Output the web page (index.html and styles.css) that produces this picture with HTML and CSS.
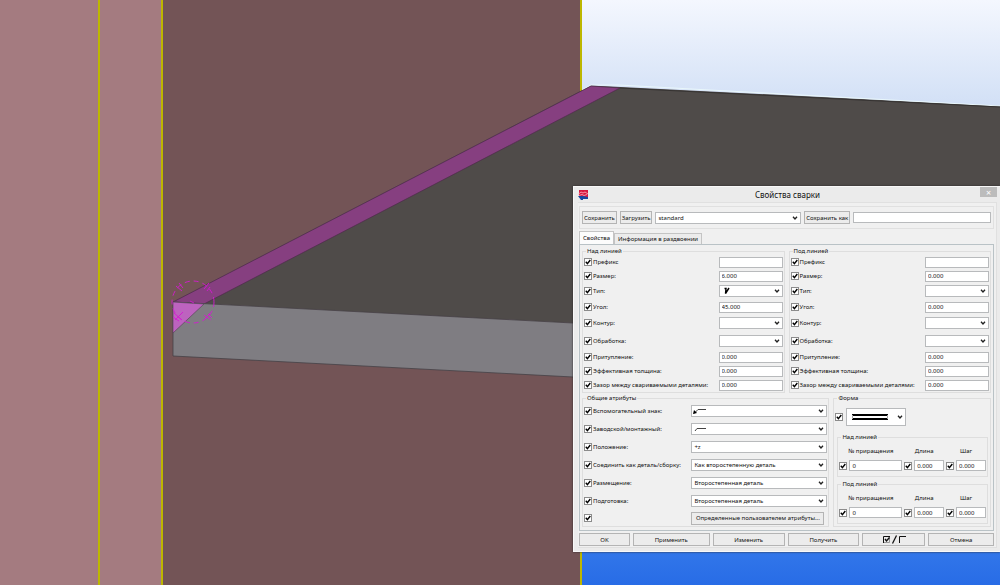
FILE: index.html
```html
<!DOCTYPE html>
<html lang="ru">
<head>
<meta charset="utf-8">
<title>Свойства сварки</title>
<link rel="stylesheet" href="styles.css">
</head>
<body>
<main class="viewport">
<svg class="scene" viewBox="0 0 1000 585" preserveAspectRatio="xMinYMin slice" aria-hidden="true">
  <defs>
    <linearGradient id="sky" x1="0" y1="0" x2="0" y2="1">
      <stop offset="0" stop-color="#f4f7fe"/>
      <stop offset="0.18" stop-color="#d2e0f6"/>
      <stop offset="0.94" stop-color="#3277ea"/>
      <stop offset="1" stop-color="#286ce6"/>
    </linearGradient>
  </defs>
  <rect x="581" width="419" height="585" fill="url(#sky)"/>
  <rect width="162" height="585" fill="#a47b80"/>
  <rect x="162" width="418" height="585" fill="#735456"/>
  <path d="M99 0V585M162 0V585M581 0V585" stroke="#bdb700" stroke-width="2"/>
  <path d="M591 85.500L1000 106V340L573 323L173 302Z" fill="#4f4b49"/>
  <path d="M582 90L591 85H619L1000 106" fill="none" stroke="#e9f7fb"/>
  <path d="M173 302L591 86L620 88L204 304Z" fill="#863f80" stroke="#4e2b4b" stroke-width="0.700"/>
  <path d="M620 88L1000 107" stroke="#363332"/>
  <path d="M173 302L573 323L640 327V381L573 377L173 356Z" fill="#7f7d82" stroke="#454146" stroke-width="0.800"/>
  <path d="M173 302L204 304L173 333Z" fill="#bd63bf" stroke="#5b455b" stroke-width="0.700"/>
  <g fill="none" stroke="#d41bd0">
    <circle cx="193" cy="302" r="21" stroke-dasharray="5 4" stroke-width="0.900"/>
    <path d="M176 286l6 5M179 283l4 5M204 289l5-6M207 291l3-4M174 313l8 7M173 317l6 4M175 320l8-8M204 315l7 5M205 319l5-6M208 314l4 4M190 301l4 2" stroke-width="0.900"/>
  </g>
</svg>

<section class="dialog" role="dialog" aria-labelledby="dialog-title">
  <header class="titlebar">
    <svg class="app-icon" viewBox="0 0 10 10" aria-hidden="true"><path d="M1 0h9v7H1z" fill="#d8173d"/><path d="M0 6h5l5 1v2H5v1H3z" fill="#17479e"/><path d="M0 4.500l3-2.500 2 1 2-1 3 2M1 5.500l3-1 2 1 3-1" stroke="#fbb4c3" fill="none" stroke-width="0.800"/></svg>
    <h1 id="dialog-title">Свойства сварки</h1>
    <button class="close" aria-label="Закрыть">×</button>
  </header>

  <div class="client">
    <div class="toolbar">
      <button>Сохранить</button>
      <button>Загрузить</button>
      <select class="preset" aria-label="Набор свойств"><option>standard</option></select>
      <button>Сохранить как</button>
      <input class="save-name" type="text" aria-label="Имя набора">
    </div>

    <div class="tabs" role="tablist">
      <button class="tab active" role="tab" aria-selected="true">Свойства</button>
      <button class="tab" role="tab" aria-selected="false">Информация в раздвоении</button>
    </div>

    <div class="panel" role="tabpanel">
      <div class="sides">
        <fieldset>
          <legend>Над линией</legend>
          <div class="side-rows">
            <label><input type="checkbox" checked>Префикс</label><input type="text" aria-label="Префикс">
            <label><input type="checkbox" checked>Размер:</label><input type="text" aria-label="Размер" value="6.000">
            <label><input type="checkbox" checked>Тип:</label><select class="pic-bevel" aria-label="Тип"><option></option></select>
            <label><input type="checkbox" checked>Угол:</label><input type="text" aria-label="Угол" value="45.000">
            <label><input type="checkbox" checked>Контур:</label><select aria-label="Контур"><option></option></select>
            <label><input type="checkbox" checked>Обработка:</label><select aria-label="Обработка"><option></option></select>
            <label><input type="checkbox" checked>Притупление:</label><input type="text" aria-label="Притупление" value="0.000">
            <label><input type="checkbox" checked>Эффективная толщина:</label><input type="text" aria-label="Эффективная толщина" value="0.000">
            <label><input type="checkbox" checked>Зазор между свариваемыми деталями:</label><input type="text" aria-label="Зазор" value="0.000">
          </div>
        </fieldset>
        <fieldset>
          <legend>Под линией</legend>
          <div class="side-rows">
            <label><input type="checkbox" checked>Префикс</label><input type="text" aria-label="Префикс">
            <label><input type="checkbox" checked>Размер:</label><input type="text" aria-label="Размер" value="0.000">
            <label><input type="checkbox" checked>Тип:</label><select aria-label="Тип"><option></option></select>
            <label><input type="checkbox" checked>Угол:</label><input type="text" aria-label="Угол" value="0.000">
            <label><input type="checkbox" checked>Контур:</label><select aria-label="Контур"><option></option></select>
            <label><input type="checkbox" checked>Обработка:</label><select aria-label="Обработка"><option></option></select>
            <label><input type="checkbox" checked>Притупление:</label><input type="text" aria-label="Притупление" value="0.000">
            <label><input type="checkbox" checked>Эффективная толщина:</label><input type="text" aria-label="Эффективная толщина" value="0.000">
            <label><input type="checkbox" checked>Зазор между свариваемыми деталями:</label><input type="text" aria-label="Зазор" value="0.000">
          </div>
        </fieldset>
      </div>

      <div class="lower">
        <fieldset>
          <legend>Общие атрибуты</legend>
          <div class="common-rows">
            <label><input type="checkbox" checked>Вспомогательный знак:</label><select class="pic-arrow" aria-label="Вспомогательный знак"><option></option></select>
            <label><input type="checkbox" checked>Заводской/монтажный:</label><select class="pic-line" aria-label="Заводской/монтажный"><option></option></select>
            <label><input type="checkbox" checked>Положение:</label><select aria-label="Положение"><option>+z</option></select>
            <label><input type="checkbox" checked>Соединить как деталь/сборку:</label><select aria-label="Соединить как"><option>Как второстепенную деталь</option></select>
            <label><input type="checkbox" checked>Размещение:</label><select aria-label="Размещение"><option>Второстепенная деталь</option></select>
            <label><input type="checkbox" checked>Подготовка:</label><select aria-label="Подготовка"><option>Второстепенная деталь</option></select>
            <label><input type="checkbox" checked aria-label="Атрибуты пользователя"></label><button class="user-attrs">Определенные пользователем атрибуты...</button>
          </div>
        </fieldset>

        <fieldset class="form-group">
          <legend>Форма</legend>
          <div class="shape-row">
            <input type="checkbox" checked aria-label="Форма">
            <select class="pic-shape" aria-label="Вид формы"><option></option></select>
          </div>
          <fieldset class="increments">
            <legend>Над линией</legend>
            <div class="increment-grid">
              <span class="head">№ приращения</span><span class="head">Длина</span><span class="head">Шаг</span>
              <input type="checkbox" checked aria-label="№ приращения"><input type="text" aria-label="№ приращения" value="0">
              <input type="checkbox" checked aria-label="Длина"><input type="text" aria-label="Длина" value="0.000">
              <input type="checkbox" checked aria-label="Шаг"><input type="text" aria-label="Шаг" value="0.000">
            </div>
          </fieldset>
          <fieldset class="increments">
            <legend>Под линией</legend>
            <div class="increment-grid">
              <span class="head">№ приращения</span><span class="head">Длина</span><span class="head">Шаг</span>
              <input type="checkbox" checked aria-label="№ приращения"><input type="text" aria-label="№ приращения" value="0">
              <input type="checkbox" checked aria-label="Длина"><input type="text" aria-label="Длина" value="0.000">
              <input type="checkbox" checked aria-label="Шаг"><input type="text" aria-label="Шаг" value="0.000">
            </div>
          </fieldset>
        </fieldset>
      </div>
    </div>

    <footer class="actions">
      <button>OK</button>
      <button>Применить</button>
      <button>Изменить</button>
      <button>Получить</button>
      <button aria-label="Отметить или снять все"><svg viewBox="0 0 24 9" width="24" height="9" aria-hidden="true"><g fill="none" stroke="#111"><path d="M1.500 8V1.500H8M17.500 8V1.500H24"/><path d="M2 7.500H7.500V2" stroke="#999"/><path d="M3 4l1.500 2L7.500 2.500" stroke-width="1.400"/><path d="M10.500 8.500L14.500 0.500" stroke-width="1.300"/></g></svg></button>
      <button>Отмена</button>
    </footer>
  </div>
</section>
</main>
</body>
</html>
```

FILE: styles.css
```css
* { box-sizing: border-box; }

body {
  margin: 0;
  font: 6px/8px "Noto Sans", "Open Sans", sans-serif;
  color: #111;
}

.viewport {
  position: relative;
  min-height: 100vh;
  overflow: hidden;
  background: #735456;
}

.scene {
  position: absolute;
  inset: 0;
  width: 100%;
  height: 100%;
}

.dialog {
  position: absolute;
  top: 186px;
  right: 0;
  width: 427px;
  padding: 0 3px 3px 4px;
  background: #ebebeb;
  border: solid #f8f8f8;
  border-width: 1px 0 1px 1px;
  box-shadow: 0 0 2px #2c2929;
}

.titlebar {
  display: grid;
  grid-template-columns: 17px 1fr 17px;
  align-items: center;
  height: 15px;
}
.app-icon { width: 10px; height: 10px; }
.titlebar h1 {
  margin: 0;
  font-size: 8px;
  font-weight: 400;
  text-align: center;
}
.titlebar .close {
  align-self: start;
  height: 10px;
  padding: 0;
  border: 0;
  background: #bcbcbc;
  color: #fff;
  font-size: 9px;
  line-height: 9px;
}

.client {
  padding: 3px 2px 1px 1px;
  background: #f0f0f0;
  border: 1px solid #e0e0e0;
  border-left: 0;
}

button, select, input[type="text"] {
  font: inherit;
  color: inherit;
  margin: 0;
  min-width: 0;
  border-radius: 0;
}

button {
  padding: 0 1px;
  background: #ececec;
  border: 1px solid #b4b4b4;
  white-space: nowrap;
}

select, input[type="text"] {
  width: 100%;
  background-color: #fff;
  border: 1px solid #b8babc;
}
input[type="text"] { height: 11px; padding: 0 2px; }

select {
  appearance: none;
  height: 12px;
  padding: 0 10px 0 2px;
  background-image: url("data:image/svg+xml,%3Csvg xmlns='http://www.w3.org/2000/svg' viewBox='0 0 6 4'%3E%3Cpath d='M1 .7L3 3 5 .7' fill='none' stroke='%23222' stroke-width='1.3'/%3E%3C/svg%3E");
  background-repeat: no-repeat;
  background-size: 6px 4px;
  background-position: right 2px center;
}

input[type="checkbox"] {
  appearance: none;
  flex: none;
  width: 8px;
  height: 8px;
  margin: 0;
  border: 1px solid #8c8c8c;
  background: #fff url("data:image/svg+xml,%3Csvg xmlns='http://www.w3.org/2000/svg' viewBox='0 0 6 6'%3E%3Cpath d='M.8 2.800L2.400 4.700 5.300 1' fill='none' stroke='%23000' stroke-width='1.400'/%3E%3C/svg%3E") center / 6px 6px no-repeat;
}

fieldset {
  min-width: 0;
  margin: 0;
  padding: 0 1px;
  border: 1px solid #dedede;
}
legend {
  margin-left: 2px;
  padding: 0 1px;
  line-height: 8px;
}

.toolbar {
  display: flex;
  align-items: center;
  gap: 3px;
  height: 23px;
  padding: 0 2px;
  border: 1px solid #e0e0e0;
}
.toolbar button { height: 13px; }
.toolbar .preset, .toolbar .save-name { flex: 1; }

.tabs {
  display: flex;
  align-items: flex-end;
  height: 15px;
}
.tab {
  height: 11px;
  padding: 0 3px;
  border-color: #c4c4c4;
  border-bottom: 0;
}
.tab.active {
  height: 13px;
  background: #fcfcfc;
}

.panel {
  padding: 2px 2px 3px;
  border: 1px solid #b9c2c6;
}

.sides {
  display: grid;
  grid-template-columns: 1fr 1fr;
  gap: 4px;
}
.side-rows {
  display: grid;
  grid-template-columns: 1fr 64px;
  grid-template-rows: 14px 14px 16px 16px 16px 19px 14px 14px 14px;
  align-items: center;
}
label {
  display: flex;
  align-items: center;
  gap: 1px;
  white-space: nowrap;
}

.lower {
  display: grid;
  grid-template-columns: 248fr 158fr;
  gap: 4px;
  margin-top: 1px;
}
.common-rows {
  display: grid;
  grid-template-columns: 1fr 136px;
  grid-template-rows: repeat(6, 18px) 16px;
  align-items: center;
}
.user-attrs {
  justify-self: start;
  width: 133px;
  height: 13px;
}

.pic-bevel, .pic-arrow, .pic-line, .pic-shape {
  background-repeat: no-repeat, no-repeat;
  background-position: right 2px center, 2px center;
}
.pic-bevel {
  background-image: url("data:image/svg+xml,%3Csvg xmlns='http://www.w3.org/2000/svg' viewBox='0 0 6 4'%3E%3Cpath d='M1 .7L3 3 5 .7' fill='none' stroke='%23222' stroke-width='1.3'/%3E%3C/svg%3E"), url("data:image/svg+xml,%3Csvg xmlns='http://www.w3.org/2000/svg' viewBox='0 0 8 8'%3E%3Cpath d='M2.500 1.500H4L3.500 6.500 7 1' fill='none' stroke='%23000' stroke-width='1.400'/%3E%3C/svg%3E");
  background-size: 6px 4px, 8px 8px;
}
.pic-arrow {
  background-image: url("data:image/svg+xml,%3Csvg xmlns='http://www.w3.org/2000/svg' viewBox='0 0 6 4'%3E%3Cpath d='M1 .7L3 3 5 .7' fill='none' stroke='%23222' stroke-width='1.3'/%3E%3C/svg%3E"), url("data:image/svg+xml,%3Csvg xmlns='http://www.w3.org/2000/svg' viewBox='0 0 14 8'%3E%3Cpath d='M1 6.500L5 2.500H13' fill='none' stroke='%23444'/%3E%3Cpath d='M0 7L1 3 4 6Z'/%3E%3C/svg%3E");
  background-size: 6px 4px, 14px 8px;
  background-position: right 2px center, 1px center;
}
.pic-line {
  background-image: url("data:image/svg+xml,%3Csvg xmlns='http://www.w3.org/2000/svg' viewBox='0 0 6 4'%3E%3Cpath d='M1 .7L3 3 5 .7' fill='none' stroke='%23222' stroke-width='1.3'/%3E%3C/svg%3E"), url("data:image/svg+xml,%3Csvg xmlns='http://www.w3.org/2000/svg' viewBox='0 0 14 8'%3E%3Cpath d='M2 6L4 3.500H13' fill='none' stroke='%23444'/%3E%3C/svg%3E");
  background-size: 6px 4px, 14px 8px;
  background-position: right 2px center, 1px center;
}
.pic-shape {
  background-image: url("data:image/svg+xml,%3Csvg xmlns='http://www.w3.org/2000/svg' viewBox='0 0 6 4'%3E%3Cpath d='M1 .7L3 3 5 .7' fill='none' stroke='%23222' stroke-width='1.3'/%3E%3C/svg%3E"), url("data:image/svg+xml,%3Csvg xmlns='http://www.w3.org/2000/svg' viewBox='0 0 38 8'%3E%3Cpath d='M1 2H37M1 6H37' stroke='%23000' stroke-width='2'/%3E%3Cpath d='M1.500 2V6M36.500 2V6' stroke='%23aaa'/%3E%3C/svg%3E");
  background-size: 6px 4px, 38px 8px;
  background-position: right 2px center, 4px center;
}

.shape-row {
  display: flex;
  align-items: center;
  gap: 3px;
  padding: 6px 0 7px;
}
.shape-row select { width: 60px; height: 18px; }

.increments { margin: 0 1px 3px 2px; }
.increments:last-child { margin-bottom: 0; }
.increment-grid {
  display: grid;
  grid-template-columns: 8px 53fr 8px 30fr 8px 30fr;
  gap: 3px 2px;
  align-items: center;
  padding: 5px 0;
}
.head {
  grid-column: span 2;
  justify-self: center;
  line-height: 11px;
}

.actions {
  display: grid;
  grid-template-columns: 51fr 77fr 72fr 72fr 63fr 66fr;
  gap: 3px;
  margin-top: 2px;
}
.actions button {
  display: flex;
  align-items: center;
  justify-content: center;
  height: 13px;
}
```
